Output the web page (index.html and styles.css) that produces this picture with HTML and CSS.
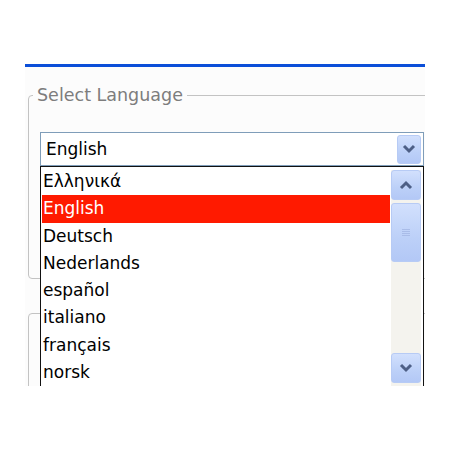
FILE: index.html
```
<!DOCTYPE html>
<html lang="en">
<head>
    <meta charset="UTF-8">
    <meta name="viewport" content="width=device-width, initial-scale=1.0">
    <title>Select Language</title>
    <link rel="stylesheet" href="styles.css">
</head>
<body>
    <div class="panel">
        <fieldset class="group">
            <legend>Select Language</legend>
            <div class="combo">
                <span class="combo-value">English</span>
                <span class="xp-btn combo-btn">
                    <svg width="14" height="10" viewBox="0 0 14 10"><path d="M2 2 L7 7 L12 2" fill="none" stroke="#4d5f86" stroke-width="3"/></svg>
                </span>
            </div>
        </fieldset>
        <fieldset class="group group-next"></fieldset>

        <div class="listbox">
            <ul class="options">
                <li>Ελληνικά</li>
                <li class="selected">English</li>
                <li>Deutsch</li>
                <li>Nederlands</li>
                <li>español</li>
                <li>italiano</li>
                <li>français</li>
                <li>norsk</li>
            </ul>
            <div class="scrollbar">
                <span class="xp-btn arrow">
                    <svg width="14" height="10" viewBox="0 0 14 10"><path d="M2 8 L7 3 L12 8" fill="none" stroke="#4d5f86" stroke-width="3"/></svg>
                </span>
                <span class="xp-btn thumb">
                    <svg width="8" height="9" viewBox="0 0 8 9"><path d="M0 1.5h8M0 3.5h8M0 5.5h8M0 7.5h8" stroke="#a9bce8" stroke-width="1"/></svg>
                </span>
                <span class="track"></span>
                <span class="xp-btn arrow">
                    <svg width="14" height="10" viewBox="0 0 14 10"><path d="M2 2 L7 7 L12 2" fill="none" stroke="#4d5f86" stroke-width="3"/></svg>
                </span>
            </div>
        </div>
    </div>
</body>
</html>
```
FILE: styles.css
```
body {
    margin: 0;
    background: #fff;
    font-family: "DejaVu Sans", Tahoma, sans-serif;
}
.panel {
    position: relative;
    margin: 64px 0 0 25px;
    width: 400px;
    height: 319px;
    border-top: 3px solid #0b4ed8;
    background: #fcfcfc;
    overflow: hidden;
}
.group {
    margin: 18px 0 0 3px;
    padding: 27px 0 0 11px;
    width: 500px;
    height: 165px;
    border: 1px solid #c3c3c3;
    border-radius: 4px;
}
.group legend {
    margin-left: -7px;
    padding: 0 4px;
    font-size: 17.5px;
    line-height: 20px;
    color: #7d7d7d;
}
.group-next {
    margin-top: 34px;
    height: 200px;
}
.combo {
    display: flex;
    align-items: center;
    justify-content: space-between;
    width: 382px;
    height: 32px;
    border: 1px solid #7f9db9;
    background: #fff;
}
.combo-value {
    padding-left: 5px;
    font-size: 17px;
    color: #000;
}
.combo-btn {
    width: 24px;
    height: 29px;
    margin-right: 2px;
}
.xp-btn {
    display: flex;
    align-items: center;
    justify-content: center;
    box-sizing: border-box;
    border: 1px solid #b7cbf5;
    border-radius: 3px;
    background: linear-gradient(#d2e0fd, #bcd0f8 60%, #b3c8f6);
}
.listbox {
    position: absolute;
    left: 15px;
    top: 99px;
    width: 382px;
    height: 240px;
    display: flex;
    border: 1px solid #111;
    background: #fff;
}
.options {
    flex: 1;
    margin: 0;
    padding: 1px 0 0 1px;
    list-style: none;
}
.options li {
    height: 27.3px;
    line-height: 27.5px;
    padding-left: 1px;
    font-size: 17px;
    color: #000;
}
.options li.selected {
    background: #ff1a00;
    color: #fff;
}
.scrollbar {
    display: flex;
    flex-direction: column;
    width: 30px;
    margin: 3px 2px 0 1px;
    background: #f4f3ee;
}
.scrollbar .arrow {
    height: 30px;
}
.scrollbar .thumb {
    height: 59px;
    margin-top: 3px;
}
.scrollbar .track {
    height: 91px;
}
```
